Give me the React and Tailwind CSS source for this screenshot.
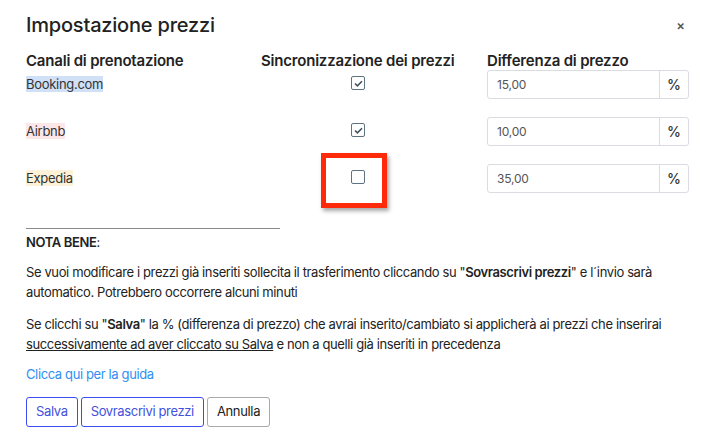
import React from 'react'

const ROWS = [
  { name: 'Booking.com', hl: 'bg-[#cfe0f7]', checked: true, value: '15,00' },
  { name: 'Airbnb', hl: 'bg-[#fde6e8]', checked: true, value: '10,00' },
  { name: 'Expedia', hl: 'bg-[#fdf2d8]', checked: false, value: '35,00' },
]

function Check({ checked }) {
  return (
    <span className="w-[14px] h-[14px] border border-[#5d7381] rounded-[2px] flex items-center justify-center bg-white">
      {checked && (
        <svg width="9" height="7" viewBox="0 0 9 7" fill="none">
          <path d="M1 3.5 L3.4 5.8 L8 1.2" stroke="#3f525e" strokeWidth="1.6" />
        </svg>
      )}
    </span>
  )
}

export default function App() {
  return (
    <div className="w-[717px] h-[439px] bg-white overflow-hidden text-[#222] font-['Inter',sans-serif]">
      {/* Header */}
      <div className="flex items-start justify-between pl-[26px] pr-[32px] pt-[12px]">
        <h2 className="text-[20px] leading-[26px] font-medium tracking-[-0.2px]">Impostazione prezzi</h2>
        <span className="text-[13px] leading-none text-[#555] mt-[7px] font-semibold">×</span>
      </div>

      {/* Table */}
      <div className="pl-[26px] mt-[13px]">
        <div className="flex text-[15px] leading-[20px] font-semibold tracking-[-0.2px]">
          <div className="w-[235px]">Canali di prenotazione</div>
          <div className="w-[226px]">Sincronizzazione dei prezzi</div>
          <div>Differenza di prezzo</div>
        </div>

        <div className="flex flex-col gap-[18px] -mt-[1px]">
          {ROWS.map(r => (
            <div key={r.name} className="flex items-start h-[29px]">
              <div className="w-[235px] pt-[1px]">
                <span className={`${r.hl} text-[13px] leading-[16px] tracking-[-0.3px] text-[#333]`}>{r.name}</span>
              </div>
              <div className="w-[226px] relative">
                <div className="w-[194px] flex justify-center pt-[6px]">
                  <Check checked={r.checked} />
                </div>
                {!r.checked && (
                  <div className="absolute left-[60px] top-[-11px] w-[66px] h-[55px] border-[5px] border-[#ff2a0a] shadow-[2px_3px_4px_rgba(0,0,0,0.35)]" />
                )}
              </div>
              <div className="flex w-[202px] h-[29px] border border-[#d9dde2] rounded-[3px]">
                <div className="flex-1 flex items-center pl-[9px] text-[12px] text-[#555] tracking-[-0.2px]">{r.value}</div>
                <div className="w-[29px] border-l border-[#d9dde2] flex items-center justify-center text-[14px] font-medium text-[#333]">%</div>
              </div>
            </div>
          ))}
        </div>

        {/* Nota bene */}
        <div className="w-[254px] h-[1px] bg-[#8a8a8a] mt-[35px]" />
        <div className="mt-[3px] text-[13px] leading-[20px] text-[#222] pr-[30px] tracking-[-0.38px]">
          <div className="font-semibold">NOTA BENE<span className="font-normal">:</span></div>
          <p className="mt-[10px]">
            Se vuoi modificare i prezzi già inseriti sollecita il trasferimento cliccando su "<b className="font-semibold">Sovrascrivi prezzi</b>" e l´invio sarà automatico. Potrebbero occorrere alcuni minuti
          </p>
          <p className="mt-[12px]">
            Se clicchi su "<b className="font-semibold">Salva</b>" la % (differenza di prezzo) che avrai inserito/cambiato si applicherà ai prezzi che inserirai <span className="underline">successivamente ad aver cliccato su Salva</span> e non a quelli già inseriti in precedenza
          </p>
          <div className="mt-[10px] text-[#2f8ef4]">Clicca qui per la guida</div>
        </div>

        {/* Buttons */}
        <div className="flex gap-[3px] mt-[13px] text-[13px] tracking-[-0.35px]">
          <button className="h-[30px] px-[9px] border border-[#3d4cf0] rounded-[3px] text-[#4451dd]">Salva</button>
          <button className="h-[30px] px-[9px] border border-[#3d4cf0] rounded-[3px] text-[#4451dd]">Sovrascrivi prezzi</button>
          <button className="h-[30px] px-[9px] border border-[#aaa] rounded-[3px] text-[#222]">Annulla</button>
        </div>
      </div>
    </div>
  )
}
